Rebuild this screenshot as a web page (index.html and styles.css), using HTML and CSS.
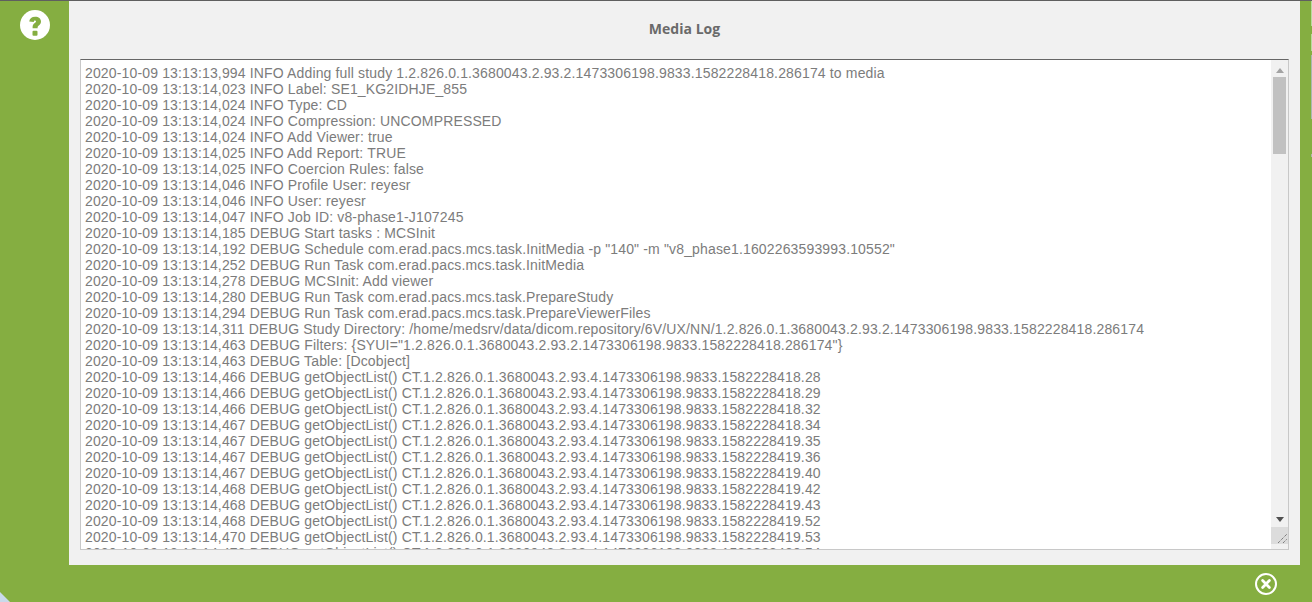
FILE: index.html
```html
<!DOCTYPE html>
<html lang="en">
<head>
<meta charset="utf-8">
<title>Media Log</title>
<link rel="stylesheet" href="styles.css">
</head>
<body>
<div class="app">
  <div class="topline"></div>
  <div class="main">
    <aside class="side">
      <svg class="help" width="30" height="30" viewBox="0 0 30 30" aria-label="Help"><circle cx="15" cy="15" r="15" fill="#fff"/><path d="M9.200 11.500C9.600 8.600 11.800 6.700 15.200 6.700 18.600 6.700 21 8.700 21 11.600 21 13.800 19.800 14.900 18.500 15.800 17.700 16.400 17.600 16.800 17.600 18.300H12.600V17C12.600 15 13.300 13.900 14.800 12.900 15.600 12.300 16 12.100 16 11.500 16 10.900 15.600 10.600 15 10.600 14.300 10.600 13.900 11.100 13.800 12z" fill="#85ae41"/><rect x="12.500" y="20.700" width="5" height="5" rx="1" fill="#85ae41"/></svg>
    </aside>
    <section class="panel">
      <h1 class="title">Media Log</h1>
      <div class="logbox">
        <div class="log">
          <div>2020-10-09 13:13:13,994 INFO Adding full study 1.2.826.0.1.3680043.2.93.2.1473306198.9833.1582228418.286174 to media</div>
          <div>2020-10-09 13:13:14,023 INFO Label: SE1_KG2IDHJE_855</div>
          <div>2020-10-09 13:13:14,024 INFO Type: CD</div>
          <div>2020-10-09 13:13:14,024 INFO Compression: UNCOMPRESSED</div>
          <div>2020-10-09 13:13:14,024 INFO Add Viewer: true</div>
          <div>2020-10-09 13:13:14,025 INFO Add Report: TRUE</div>
          <div>2020-10-09 13:13:14,025 INFO Coercion Rules: false</div>
          <div>2020-10-09 13:13:14,046 INFO Profile User: reyesr</div>
          <div>2020-10-09 13:13:14,046 INFO User: reyesr</div>
          <div>2020-10-09 13:13:14,047 INFO Job ID: v8-phase1-J107245</div>
          <div>2020-10-09 13:13:14,185 DEBUG Start tasks : MCSInit</div>
          <div>2020-10-09 13:13:14,192 DEBUG Schedule com.erad.pacs.mcs.task.InitMedia -p "140" -m "v8_phase1.1602263593993.10552"</div>
          <div>2020-10-09 13:13:14,252 DEBUG Run Task com.erad.pacs.mcs.task.InitMedia</div>
          <div>2020-10-09 13:13:14,278 DEBUG MCSInit: Add viewer</div>
          <div>2020-10-09 13:13:14,280 DEBUG Run Task com.erad.pacs.mcs.task.PrepareStudy</div>
          <div>2020-10-09 13:13:14,294 DEBUG Run Task com.erad.pacs.mcs.task.PrepareViewerFiles</div>
          <div>2020-10-09 13:13:14,311 DEBUG Study Directory: /home/medsrv/data/dicom.repository/6V/UX/NN/1.2.826.0.1.3680043.2.93.2.1473306198.9833.1582228418.286174</div>
          <div>2020-10-09 13:13:14,463 DEBUG Filters: {SYUI="1.2.826.0.1.3680043.2.93.2.1473306198.9833.1582228418.286174"}</div>
          <div>2020-10-09 13:13:14,463 DEBUG Table: [Dcobject]</div>
          <div>2020-10-09 13:13:14,466 DEBUG getObjectList() CT.1.2.826.0.1.3680043.2.93.4.1473306198.9833.1582228418.28</div>
          <div>2020-10-09 13:13:14,466 DEBUG getObjectList() CT.1.2.826.0.1.3680043.2.93.4.1473306198.9833.1582228418.29</div>
          <div>2020-10-09 13:13:14,466 DEBUG getObjectList() CT.1.2.826.0.1.3680043.2.93.4.1473306198.9833.1582228418.32</div>
          <div>2020-10-09 13:13:14,467 DEBUG getObjectList() CT.1.2.826.0.1.3680043.2.93.4.1473306198.9833.1582228418.34</div>
          <div>2020-10-09 13:13:14,467 DEBUG getObjectList() CT.1.2.826.0.1.3680043.2.93.4.1473306198.9833.1582228419.35</div>
          <div>2020-10-09 13:13:14,467 DEBUG getObjectList() CT.1.2.826.0.1.3680043.2.93.4.1473306198.9833.1582228419.36</div>
          <div>2020-10-09 13:13:14,467 DEBUG getObjectList() CT.1.2.826.0.1.3680043.2.93.4.1473306198.9833.1582228419.40</div>
          <div>2020-10-09 13:13:14,468 DEBUG getObjectList() CT.1.2.826.0.1.3680043.2.93.4.1473306198.9833.1582228419.42</div>
          <div>2020-10-09 13:13:14,468 DEBUG getObjectList() CT.1.2.826.0.1.3680043.2.93.4.1473306198.9833.1582228419.43</div>
          <div>2020-10-09 13:13:14,468 DEBUG getObjectList() CT.1.2.826.0.1.3680043.2.93.4.1473306198.9833.1582228419.52</div>
          <div>2020-10-09 13:13:14,470 DEBUG getObjectList() CT.1.2.826.0.1.3680043.2.93.4.1473306198.9833.1582228419.53</div>
          <div>2020-10-09 13:13:14,470 DEBUG getObjectList() CT.1.2.826.0.1.3680043.2.93.4.1473306198.9833.1582228420.54</div>
        </div>
        <div class="scrollbar">
          <svg class="arrow" width="8" height="5" viewBox="0 0 8 5"><path d="M4 0l4 5H0z" fill="#a3a3a3"/></svg>
          <div class="track"><div class="thumb"></div></div>
          <svg class="arrow" width="8" height="5" viewBox="0 0 8 5"><path d="M0 0h8L4 5z" fill="#505050"/></svg>
          <div class="resizer">
            <svg width="9" height="9" viewBox="0 0 9 9"><path d="M0 9L9 0M5 9l4-4" stroke="#555" stroke-width="1" stroke-dasharray="1 1" fill="none"/></svg>
          </div>
        </div>
      </div>
    </section>
    <div class="gutter"><div class="sliver"></div></div>
  </div>
  <footer class="foot">
    <svg class="close" width="24" height="24" viewBox="0 0 24 24" aria-label="Close"><circle cx="12" cy="12" r="10" fill="none" stroke="#fff" stroke-width="2"/><path d="M8.600 8.600l6.800 6.800M15.400 8.600l-6.800 6.800" stroke="#fff" stroke-width="2.800" stroke-linecap="round"/></svg>
  </footer>
  <svg class="corner" width="10" height="10" viewBox="0 0 10 10"><path d="M0 0l10 10H0z" fill="#c9d9ea"/></svg>
</div>
</body>
</html>
```
FILE: styles.css
```css
* { box-sizing: border-box; }
html, body { margin: 0; padding: 0; }
body { width: 1312px; height: 602px; overflow: hidden; background: #85ae41; }
.app { position: relative; display: flex; flex-direction: column; width: 1312px; height: 602px; }
.topline { height: 1px; background: #5f5f5f; flex: none; }
.main { display: flex; height: 564px; flex: none; }
.side { width: 69px; flex: none; padding: 9px 0 0 20px; }
.help { display: block; }
.panel { width: 1231px; flex: none; background: #f1f1f1; padding: 0 11px 15px 11px; display: flex; flex-direction: column; }
.title { margin: 0; height: 58px; padding-top: 18px; text-align: center; font: 700 14px/20px "Open Sans", sans-serif; letter-spacing: 0.03px; color: #6a6a6a; }
.logbox { display: flex; height: 491px; background: #fff; border: 1px solid #c8c8c8; border-top-color: #666; }
.log { flex: 1; min-width: 0; overflow: hidden; padding: 5px 0 0 4px; font: 14px/16px "Liberation Sans", Arial, sans-serif; letter-spacing: 0.15px; color: #7c7c7c; white-space: nowrap; }
.scrollbar { width: 17px; flex: none; background: #f1f1f1; display: flex; flex-direction: column; align-items: center; padding-top: 8px; position: relative; }
.arrow { display: block; flex: none; }
.track { height: 444px; width: 100%; padding: 4px 2px 0; flex: none; }
.thumb { height: 77px; background: #c1c1c1; }
.resizer { width: 17px; height: 17px; margin-top: 5px; background: #dcdcdc; display: flex; align-items: flex-end; justify-content: flex-end; padding: 0 1px 1px 0; flex: none; }
.gutter { width: 12px; flex: none; display: flex; justify-content: flex-end; }
.sliver { width: 1px; height: 100%; background: linear-gradient(#b7dc9c 0 25px, #85ae41 25px 33px, #b7dc9c 33px 50px, #85ae41 50px 54px, #a9b9b0 54px 118px, #85ae41 118px 153px, #b0b8a8 153px 156px, #85ae41 156px); }
.foot { flex: 1; display: flex; justify-content: flex-end; padding: 7px 34px 0 0; }
.close { display: block; }
.corner { position: absolute; left: 0; bottom: 0; }
```
